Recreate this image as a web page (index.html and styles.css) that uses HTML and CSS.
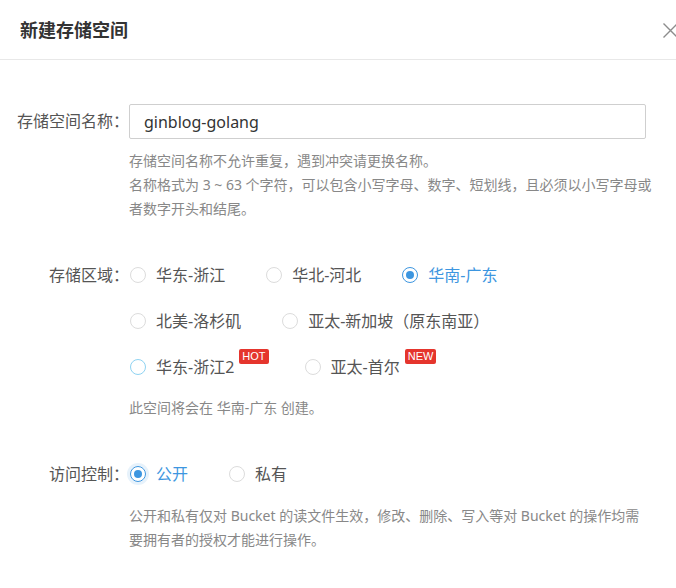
FILE: index.html
```html
<!DOCTYPE html>
<html lang="zh-CN">
<head>
<meta charset="utf-8">
<title>新建存储空间</title>
<link rel="stylesheet" href="styles.css">
</head>
<body>
<div class="dialog">
  <div class="header">
    <h1 class="title">新建存储空间</h1>
    <svg class="close" viewBox="0 0 13 15" width="13" height="15" aria-label="关闭">
      <path d="M0.5 0.5 L14.5 14.5 M14.5 0.5 L0.5 14.5" stroke="#8c8c8c" stroke-width="1.4" fill="none"/>
    </svg>
  </div>
  <div class="content">
    <div class="field field-name">
      <label class="label label-input">存储空间名称：</label>
      <div class="control">
        <input class="input" type="text" value="ginblog-golang" readonly>
        <p class="help">
          <span>存储空间名称不允许重复，遇到冲突请更换名称。</span>
          <span>名称格式为 3 ~ 63 个字符，可以包含小写字母、数字、短划线，且必须以小写字母或</span>
          <span>者数字开头和结尾。</span>
        </p>
      </div>
    </div>

    <div class="field field-region">
      <label class="label">存储区域：</label>
      <div class="control">
        <div class="radio-lines">
          <div class="radio-line">
            <span class="radio"><span class="circle"></span><span class="radio-text">华东-浙江</span></span>
            <span class="radio"><span class="circle"></span><span class="radio-text">华北-河北</span></span>
            <span class="radio checked"><span class="circle"></span><span class="radio-text">华南-广东</span></span>
          </div>
          <div class="radio-line">
            <span class="radio"><span class="circle"></span><span class="radio-text">北美-洛杉矶</span></span>
            <span class="radio"><span class="circle"></span><span class="radio-text">亚太-新加坡（原东南亚）</span></span>
          </div>
          <div class="radio-line">
            <span class="radio hover"><span class="circle"></span><span class="radio-text">华东-浙江2</span><span class="badge">HOT</span></span>
            <span class="radio"><span class="circle"></span><span class="radio-text">亚太-首尔</span><span class="badge">NEW</span></span>
          </div>
        </div>
        <p class="help note"><span>此空间将会在 华南-广东 创建。</span></p>
      </div>
    </div>

    <div class="field field-access">
      <label class="label">访问控制：</label>
      <div class="control">
        <div class="radio-line">
          <span class="radio checked focus"><span class="circle"></span><span class="radio-text">公开</span></span>
          <span class="radio"><span class="circle"></span><span class="radio-text">私有</span></span>
        </div>
        <p class="help access-help">
          <span>公开和私有仅对 Bucket 的读文件生效，修改、删除、写入等对 Bucket 的操作均需</span>
          <span>要拥有者的授权才能进行操作。</span>
        </p>
      </div>
    </div>
  </div>
</div>
</body>
</html>
```

FILE: styles.css
```css
html, body {
  margin: 0;
  padding: 0;
  background: #fff;
  overflow: hidden;
}

body {
  font-family: "Noto Sans", "Noto Sans CJK SC", sans-serif;
  color: #333;
}

.header {
  height: 59px;
  border-bottom: 1px solid #e8e8e8;
  display: flex;
  align-items: center;
  justify-content: space-between;
  padding-left: 20px;
}

.title {
  margin: 0;
  font-size: 18px;
  font-weight: 700;
  color: #333;
  line-height: 24px;
}

.close {
  display: block;
  flex: none;
  margin-top: 1px;
}

.content {
  padding: 44px 0 0 20px;
}

.field {
  display: flex;
  align-items: flex-start;
}

.label {
  width: 109px;
  flex: none;
  display: flex;
  justify-content: flex-end;
  white-space: nowrap;
  font-size: 16px;
  line-height: 22px;
  color: #555;
}

.label-input {
  line-height: 35px;
}

.control {
  display: flex;
  flex-direction: column;
  align-items: flex-start;
}

.input {
  box-sizing: border-box;
  width: 517px;
  height: 35px;
  margin: 0;
  border: 1px solid #cfcfcf;
  border-radius: 2px;
  padding: 0 14px;
  font-family: "Noto Sans", "Noto Sans CJK SC", sans-serif;
  font-size: 16px;
  color: #333;
  outline: none;
  background: #fff;
}

.help {
  margin: 10px 0 0;
  font-size: 14px;
  line-height: 24px;
  color: #888;
}

.help span {
  display: block;
  white-space: nowrap;
}

.field-region {
  margin-top: 43px;
}

.radio-lines {
  display: flex;
  flex-direction: column;
  gap: 24px;
}

.radio-line {
  display: flex;
  align-items: center;
  height: 22px;
}

.radio {
  display: flex;
  align-items: center;
  margin-right: 40px;
  font-size: 16px;
  line-height: 22px;
  color: #555;
  white-space: nowrap;
}

.circle {
  box-sizing: border-box;
  width: 16px;
  height: 16px;
  border: 1px solid #dcdcdc;
  border-radius: 50%;
  margin-left: 1px;
  margin-right: 10px;
  flex: none;
  display: flex;
  align-items: center;
  justify-content: center;
}

.checked .circle {
  border-color: #3d96e0;
}

.checked .circle::after {
  content: "";
  width: 8px;
  height: 8px;
  border-radius: 50%;
  background: #3d96e0;
}

.checked .radio-text {
  color: #3d96e0;
}

.hover .circle {
  border-color: #8fd3f2;
}

.focus .circle {
  box-shadow: 0 0 0 3px rgba(61, 150, 224, 0.12);
}

.badge {
  align-self: flex-start;
  margin: -7px -5px 0 5px;
  padding: 0 3px;
  font-family: "Liberation Sans", Arial, sans-serif;
  font-size: 11px;
  line-height: 15px;
  color: #fff;
  background: #e5352d;
  border-radius: 2px;
}

.note {
  margin-top: 18px;
}

.field-access {
  margin-top: 43px;
}

.access-help {
  margin-top: 19px;
}
```
